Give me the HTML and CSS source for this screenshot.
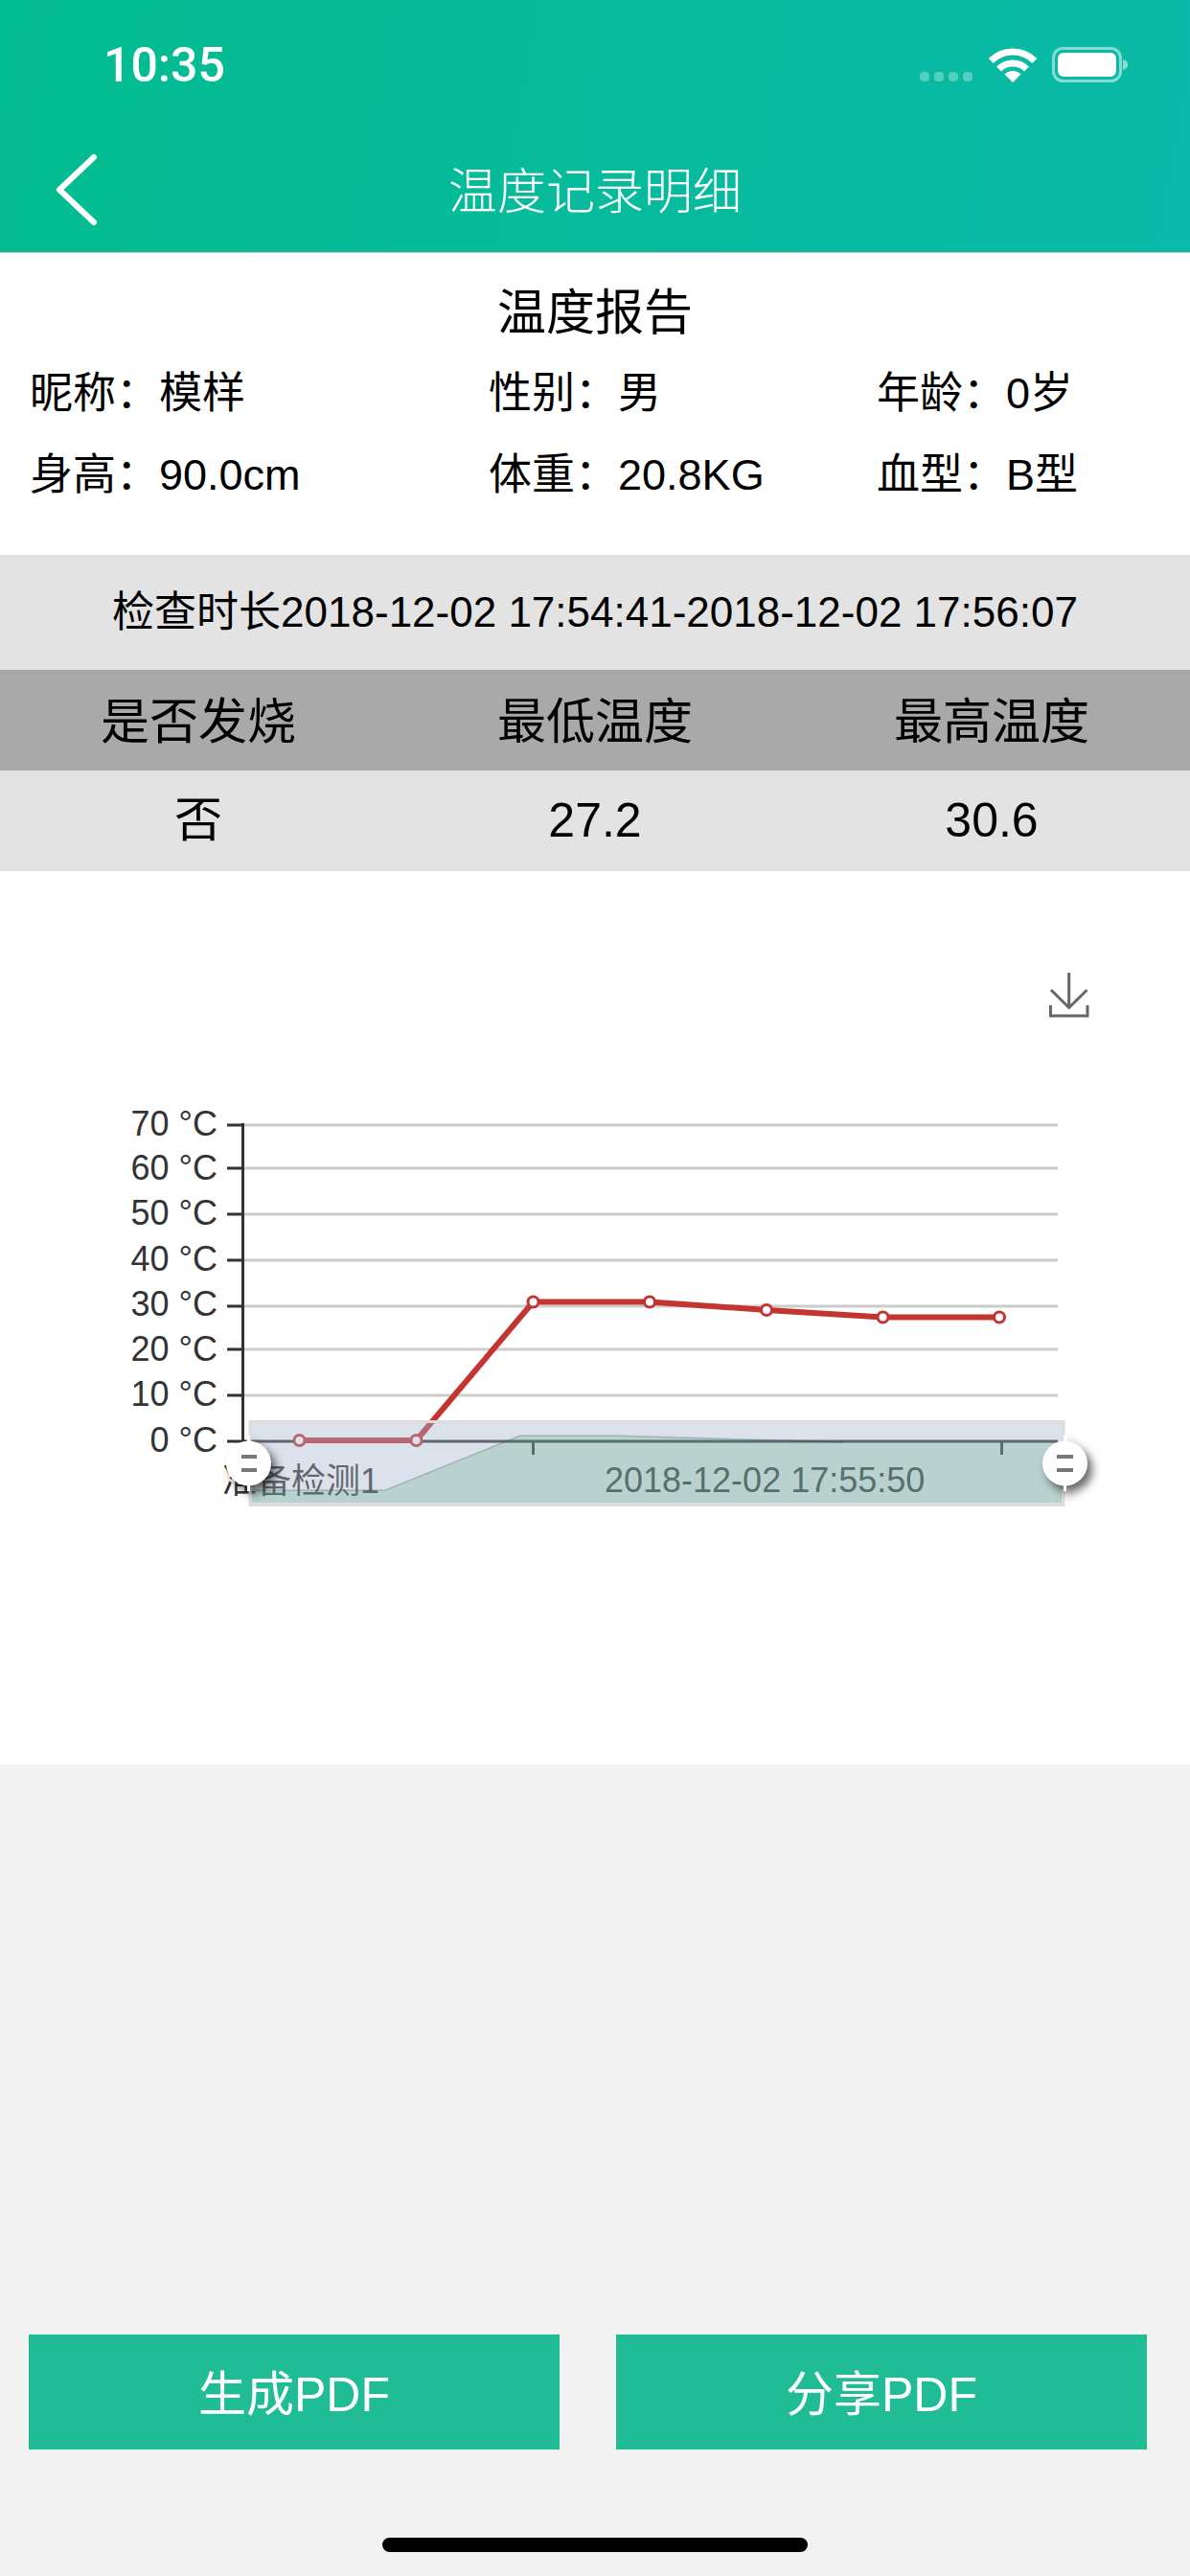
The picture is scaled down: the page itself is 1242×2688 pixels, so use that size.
FILE: index.html
```html
<!DOCTYPE html>
<html lang="zh-CN">
<head>
    <meta charset="UTF-8">
    <meta name="viewport" content="width=device-width, initial-scale=1.0">
    <title>温度记录明细</title>
    <link rel="stylesheet" href="styles.css">
</head>
<body>
    <div class="app">
        <header class="header">
            <div class="status-bar">
                <span class="time">10:35</span>
                <svg class="status-icons" width="222" height="45" viewBox="958 45 222 45">
                    <rect class="dot" x="960" y="75" width="10" height="10" rx="4"/>
                    <rect class="dot" x="975" y="75" width="10" height="10" rx="4"/>
                    <rect class="dot" x="990" y="75" width="10" height="10" rx="4"/>
                    <rect class="dot" x="1005" y="75" width="10" height="10" rx="4"/>
                    <path class="wifi-arc" d="M1034.2 63.5 A32 32 0 0 1 1079.8 63.5"/>
                    <path class="wifi-arc" d="M1042.5 72 A20.5 20.5 0 0 1 1071.5 72"/>
                    <path class="wifi-dot" d="M1057 86 L1048.5 77.5 A12 12 0 0 1 1065.5 77.5 Z"/>
                    <rect class="batt-case" x="1099.5" y="50.5" width="70" height="34" rx="10"/>
                    <rect class="batt-fill" x="1104" y="55" width="61" height="25" rx="6"/>
                    <path class="batt-nub" d="M1172 62 C1176 63 1177 65 1177 67.5 C1177 70 1176 72 1172 73 Z"/>
                </svg>
            </div>
            <nav class="nav-bar">
                <svg class="back" width="46" height="76" viewBox="0 0 46 76">
                    <path d="M42 4 L6 38 L42 72"/>
                </svg>
                <h1 class="nav-title">温度记录明细</h1>
            </nav>
        </header>

        <section class="report">
            <h2 class="report-title">温度报告</h2>
            <div class="info-grid">
                <div>昵称<span class="colon">：</span>模样</div>
                <div>性别<span class="colon">：</span>男</div>
                <div>年龄<span class="colon">：</span>0岁</div>
                <div>身高<span class="colon">：</span>90.0cm</div>
                <div>体重<span class="colon">：</span>20.8KG</div>
                <div>血型<span class="colon">：</span>B型</div>
            </div>
        </section>

        <div class="duration">检查时长2018-12-02 17:54:41-2018-12-02 17:56:07</div>
        <div class="row row-head">
            <div>是否发烧</div>
            <div>最低温度</div>
            <div>最高温度</div>
        </div>
        <div class="row row-body">
            <div>否</div>
            <div>27.2</div>
            <div>30.6</div>
        </div>

        <section class="chart">
            <svg class="chart-svg" width="1242" height="932" viewBox="0 909 1242 932">
                <!-- grid -->
                <path class="grid" d="M255 1174H1104M255 1219H1104M255 1267H1104M255 1315H1104M255 1363H1104M255 1408H1104M255 1456H1104"/>

                <!-- axes -->
                <path class="axis" d="M253.5 1172V1505M237 1174H253M237 1219H253M237 1267H253M237 1315H253M237 1363H253M237 1408H253M237 1456H253M237 1504H253"/>
                <path class="axis" d="M253 1504H1104M556.5 1504V1518M1045.5 1504V1518"/>
                <g class="axis-text">
                    <text x="227" y="1185">70 °C</text>
                    <text x="227" y="1231">60 °C</text>
                    <text x="227" y="1278">50 °C</text>
                    <text x="227" y="1326">40 °C</text>
                    <text x="227" y="1373">30 °C</text>
                    <text x="227" y="1420">20 °C</text>
                    <text x="227" y="1467">10 °C</text>
                    <text x="227" y="1515">0 °C</text>
                </g>
                <text class="x-text" x="232" y="1558">准备检测1</text>
                <text class="x-text" x="631" y="1557">2018-12-02 17:55:50</text>

                <!-- temperature line -->
                <polyline class="series" points="312.5,1503 434.5,1503 556.5,1358.5 678,1358.5 800,1367 921.5,1374.5 1043,1374.5"/>
                <g class="point">
                    <circle cx="312.5" cy="1503" r="5.5"/>
                    <circle cx="434.5" cy="1503" r="5.5"/>
                    <circle cx="556.5" cy="1358.5" r="5.5"/>
                    <circle cx="678" cy="1358.5" r="5.5"/>
                    <circle cx="800" cy="1367" r="5.5"/>
                    <circle cx="921.5" cy="1374.5" r="5.5"/>
                    <circle cx="1043" cy="1374.5" r="5.5"/>
                </g>

                <!-- zoom slider -->
                <rect class="zoom-fill" x="261" y="1483.5" width="849" height="87"/>
                <path class="zoom-area" d="M263 1555 H402 L543 1498 H640 L880 1505 H1108 V1568 H263 Z"/>
                <path class="zoom-edge" d="M263 1555 H402 L543 1498 H640 L880 1505"/>

                <g class="handle">
                    <rect x="258" y="1498" width="3" height="58"/>
                    <circle cx="259.5" cy="1527" r="23.5"/>
                </g>
                <path class="handle-bars" d="M252 1520H268M252 1534H268"/>
                <g class="handle">
                    <rect x="1110" y="1498" width="3" height="58"/>
                    <circle cx="1111.5" cy="1527" r="23.5"/>
                </g>
                <path class="handle-bars" d="M1103 1520H1120M1103 1534H1120"/>

                <!-- save icon -->
                <path class="save-icon" d="M1115.7 1015V1051M1097 1033L1115.7 1051.5L1134.5 1033M1096.5 1049V1060H1135V1049"/>
            </svg>
        </section>

        <footer class="footer">
            <div class="buttons">
                <button class="btn" type="button">生成PDF</button>
                <button class="btn" type="button">分享PDF</button>
            </div>
            <div class="home-bar"></div>
        </footer>
    </div>
</body>
</html>
```

FILE: styles.css
```css
* {
    box-sizing: border-box;
}
html, body {
    margin: 0;
    padding: 0;
}
body {
    font-family: "Liberation Sans", "Noto Sans CJK SC", sans-serif;
    background-color: #f2f2f2;
    color: #000;
}
.app {
    width: 1242px;
    height: 2688px;
    display: flex;
    flex-direction: column;
    overflow: hidden;
}

/* header */
.header {
    height: 264px;
    background: linear-gradient(100deg, #03bc8f, #0ab9a8);
    border-bottom: 1px solid #c4c4c4;
    color: #fff;
}
.status-bar {
    height: 135px;
    padding: 0 62px 0 108px;
    display: flex;
    align-items: center;
    justify-content: space-between;
}
.time {
    font-family: Roboto, sans-serif;
    font-size: 50px;
    font-weight: 500;
}
.status-icons {
    display: block;
}
.dot {
    fill: rgba(255, 255, 255, 0.3);
}
.wifi-arc {
    fill: none;
    stroke: #fff;
    stroke-width: 7;
}
.wifi-dot {
    fill: #fff;
}
.batt-case {
    fill: none;
    stroke: rgba(255, 255, 255, 0.5);
    stroke-width: 3;
}
.batt-fill {
    fill: #fff;
}
.batt-nub {
    fill: rgba(255, 255, 255, 0.5);
}
.nav-bar {
    position: relative;
    height: 128px;
    padding-bottom: 6px;
    display: flex;
    align-items: center;
    justify-content: center;
}
.back {
    position: absolute;
    left: 56px;
    top: 25px;
}
.back path {
    fill: none;
    stroke: #fff;
    stroke-width: 6;
    stroke-linecap: round;
    stroke-linejoin: round;
}
.nav-title {
    margin: 0;
    font-size: 51px;
    font-weight: 300;
}

/* report info */
.report {
    height: 315px;
    background-color: #fff;
    padding-top: 33px;
}
.report-title {
    margin: 0;
    font-size: 51px;
    font-weight: 400;
    line-height: 60px;
    text-align: center;
}
.info-grid {
    margin-top: 19px;
    padding-left: 31px;
    display: grid;
    grid-template-columns: 479px 405px 1fr;
    grid-auto-rows: 85px;
    font-size: 45px;
    line-height: 62px;
}
.colon {
    font-family: "Noto Sans CJK TC", sans-serif;
}

/* summary table */
.duration {
    height: 120px;
    background-color: #e3e3e3;
    font-size: 44px;
    line-height: 120px;
    text-align: center;
}
.row {
    display: grid;
    grid-template-columns: repeat(3, 414px);
    text-align: center;
}
.row-head {
    height: 105px;
    background-color: #a9a9a9;
    font-size: 51px;
    line-height: 110px;
}
.row-body {
    height: 105px;
    background-color: #e3e3e3;
    font-size: 50px;
    line-height: 105px;
}

/* chart */
.chart {
    height: 932px;
    background-color: #fff;
}
.chart-svg {
    display: block;
}
.chart-svg text {
    font-family: "Liberation Sans", "Noto Sans CJK SC", sans-serif;
    font-size: 36px;
    fill: #333;
}
.axis-text text {
    text-anchor: end;
}
.grid {
    fill: none;
    stroke: #ccc;
    stroke-width: 3;
}
.axis {
    fill: none;
    stroke: #333;
    stroke-width: 3;
}
.series {
    fill: none;
    stroke: #c23531;
    stroke-width: 6;
}
.point circle {
    fill: #fff;
    stroke: #c23531;
    stroke-width: 3;
}
.zoom-fill {
    fill: rgba(167, 183, 204, 0.4);
    stroke: #ddd;
    stroke-width: 3;
}
.zoom-area {
    fill: rgba(44, 150, 94, 0.2);
}
.zoom-edge {
    fill: none;
    stroke: rgba(47, 69, 84, 0.25);
    stroke-width: 1.5;
}
.handle {
    fill: #fff;
    filter: drop-shadow(5px 6px 5px rgba(0, 0, 0, 0.6));
}
.handle-bars {
    fill: none;
    stroke: #777;
    stroke-width: 4;
}
.save-icon {
    fill: none;
    stroke: #666;
    stroke-width: 3;
}

/* bottom */
.footer {
    flex: 1;
    display: flex;
    flex-direction: column;
    justify-content: flex-end;
}
.buttons {
    display: flex;
    justify-content: space-between;
    padding: 0 45px 0 30px;
}
.btn {
    width: 554px;
    height: 120px;
    padding: 0 0 5px;
    border: none;
    background-color: #1fbc96;
    color: #fff;
    font-family: inherit;
    font-size: 50px;
}
.home-bar {
    width: 444px;
    height: 15px;
    margin: 92px auto 25px;
    border-radius: 8px;
    background-color: #000;
}
```
